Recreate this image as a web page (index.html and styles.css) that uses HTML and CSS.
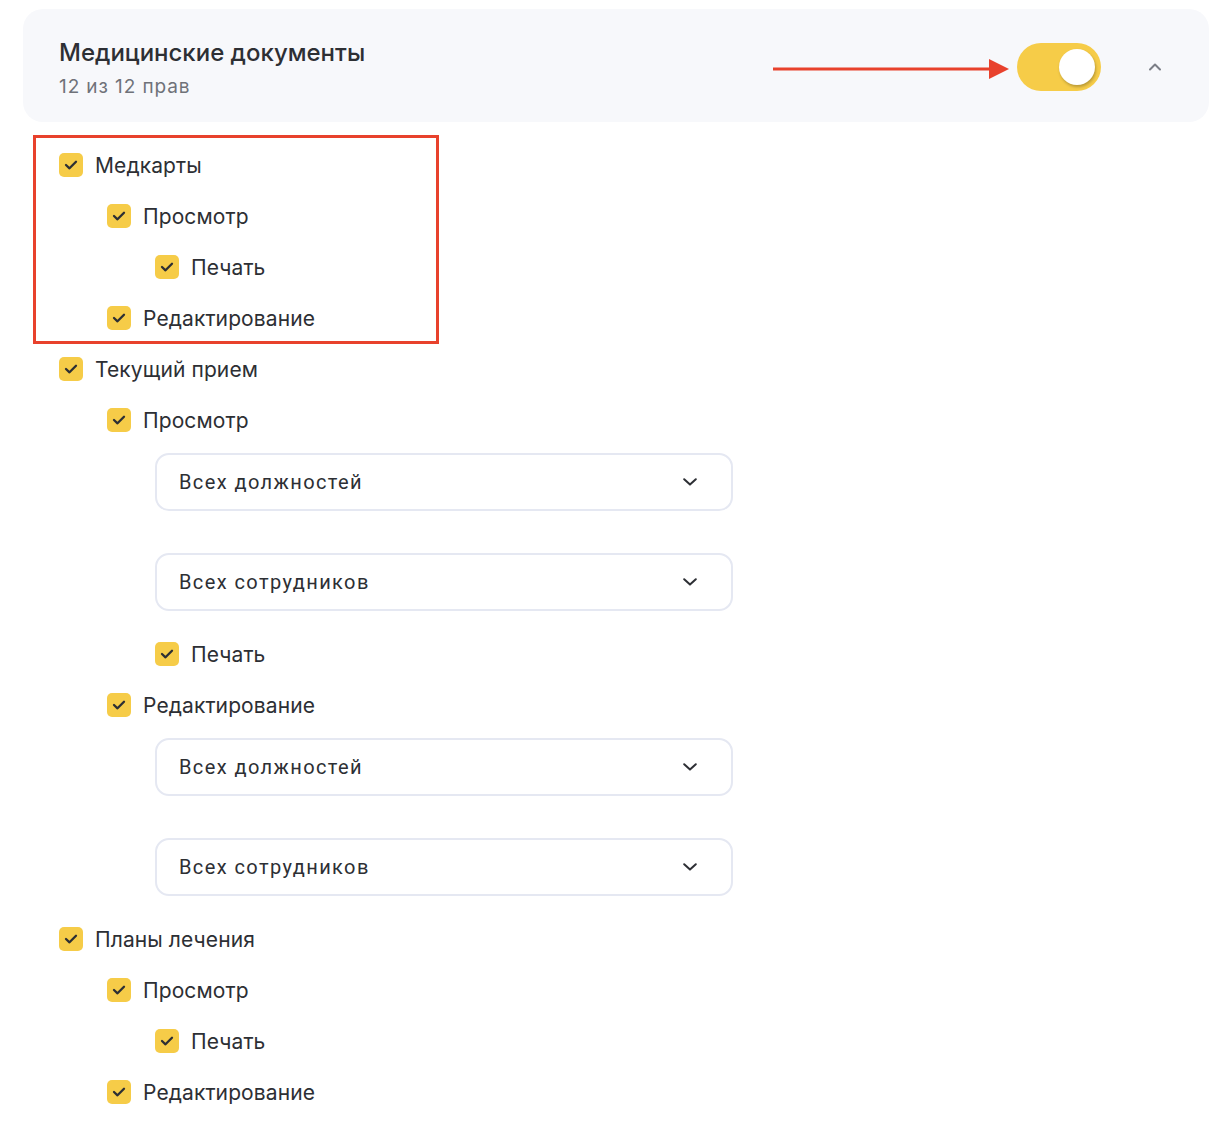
FILE: index.html
```html
<!DOCTYPE html>
<html lang="ru">
<head>
  <meta charset="UTF-8">
  <title>Медицинские документы</title>
  <link rel="stylesheet" href="styles.css">
</head>
<body>
  <div class="page">
    <div class="group-card">
      <div class="group-info">
        <div class="group-title">Медицинские документы</div>
        <div class="group-count">12 из 12 прав</div>
      </div>
      <div class="group-actions">
        <span class="toggle on"><span class="knob"></span></span>
        <svg class="collapse" width="18" height="18" viewBox="0 0 18 18"><path d="M4 11.5 L9 6.5 L14 11.5" fill="none" stroke="#7b7e86" stroke-width="2" stroke-linecap="round" stroke-linejoin="round"/></svg>
      </div>
    </div>

    <!-- annotation arrow -->
    <svg class="note-arrow" width="240" height="24" viewBox="0 0 240 24"><line x1="0" y1="12" x2="220" y2="12" stroke="#e8412c" stroke-width="3"/><polygon points="216,2 236,12 216,22" fill="#e8412c"/></svg>

    <div class="rights">
      <!-- annotation frame -->
      <div class="note-frame"></div>

      <label class="right lvl0"><span class="check"></span>Медкарты</label>
      <label class="right lvl1"><span class="check"></span>Просмотр</label>
      <label class="right lvl2"><span class="check"></span>Печать</label>
      <label class="right lvl1"><span class="check"></span>Редактирование</label>

      <label class="right lvl0"><span class="check"></span>Текущий прием</label>
      <label class="right lvl1"><span class="check"></span>Просмотр</label>
      <div class="selects">
        <div class="select">Всех должностей<span class="arrow"></span></div>
        <div class="select">Всех сотрудников<span class="arrow"></span></div>
      </div>
      <label class="right lvl2"><span class="check"></span>Печать</label>
      <label class="right lvl1"><span class="check"></span>Редактирование</label>
      <div class="selects">
        <div class="select">Всех должностей<span class="arrow"></span></div>
        <div class="select">Всех сотрудников<span class="arrow"></span></div>
      </div>

      <label class="right lvl0"><span class="check"></span>Планы лечения</label>
      <label class="right lvl1"><span class="check"></span>Просмотр</label>
      <label class="right lvl2"><span class="check"></span>Печать</label>
      <label class="right lvl1"><span class="check"></span>Редактирование</label>
    </div>
  </div>
</body>
</html>
```

FILE: styles.css
```css
body {
  margin: 0;
  background: #fff;
  font-family: Inter, 'Noto Sans', sans-serif;
  color: #2d2f34;
}

.page {
  position: relative;
  padding: 9px 21px 0 23px;
}

.group-card {
  height: 113px;
  box-sizing: border-box;
  background: #f7f8fb;
  border-radius: 20px;
  padding: 0 36px;
  display: flex;
  align-items: center;
  justify-content: space-between;
}

.group-info {
  margin-top: 6px;
}

.group-title {
  font-size: 24px;
  font-weight: 500;
  line-height: 30px;
}

.group-count {
  margin-top: 7px;
  font-size: 19px;
  letter-spacing: 0.9px;
  color: #6f7279;
  line-height: 24px;
}

.group-actions {
  display: flex;
  align-items: center;
  gap: 45px;
  margin-right: 9px;
  margin-top: 2px;
}

.toggle {
  width: 84px;
  height: 48px;
  border-radius: 24px;
  background: #f6cc48;
  position: relative;
}

.toggle .knob {
  position: absolute;
  right: 6px;
  top: 6px;
  width: 36px;
  height: 36px;
  border-radius: 50%;
  background: #fff;
  box-shadow: 1px 2px 3px rgba(0, 0, 0, 0.25);
}

.note-arrow {
  position: absolute;
  left: 773px;
  top: 57px;
}

.rights {
  position: relative;
  margin-top: 17.5px;
  padding-left: 36px;
}

.note-frame {
  position: absolute;
  left: 10px;
  top: -4.5px;
  width: 400px;
  height: 203px;
  border: 3px solid #e8412c;
}

.right {
  display: flex;
  align-items: center;
  height: 51px;
  font-size: 21px;
  letter-spacing: 0.1px;
  gap: 12px;
}

.lvl1 { padding-left: 48px; }
.lvl2 { padding-left: 96px; }

.check {
  width: 24px;
  height: 24px;
  border-radius: 5px;
  flex: none;
  background: #f6cc48 url("data:image/svg+xml,%3Csvg xmlns='http://www.w3.org/2000/svg' width='24' height='24'%3E%3Cpath d='M7 12 L10.5 15.3 L17 8.8' fill='none' stroke='%232d2f34' stroke-width='2.3' stroke-linecap='round' stroke-linejoin='round'/%3E%3C/svg%3E") no-repeat center;
}

.selects {
  display: flex;
  flex-direction: column;
  gap: 42px;
  padding: 7.5px 0 17.5px 96px;
}

.select {
  width: 578px;
  height: 58px;
  box-sizing: border-box;
  border: 2px solid #e5e8f2;
  border-radius: 14px;
  padding: 0 34px 0 22px;
  display: flex;
  align-items: center;
  justify-content: space-between;
  font-family: Roboto, Inter, sans-serif;
  font-size: 20px;
  letter-spacing: 1.4px;
  color: #2d2f34;
}

.select .arrow {
  width: 14px;
  height: 8px;
  background: url("data:image/svg+xml,%3Csvg xmlns='http://www.w3.org/2000/svg' width='14' height='8'%3E%3Cpath d='M1.2 1.2 L7 6.6 L12.8 1.2' fill='none' stroke='%232d2f34' stroke-width='2' stroke-linecap='round' stroke-linejoin='round'/%3E%3C/svg%3E") no-repeat center;
}
```
